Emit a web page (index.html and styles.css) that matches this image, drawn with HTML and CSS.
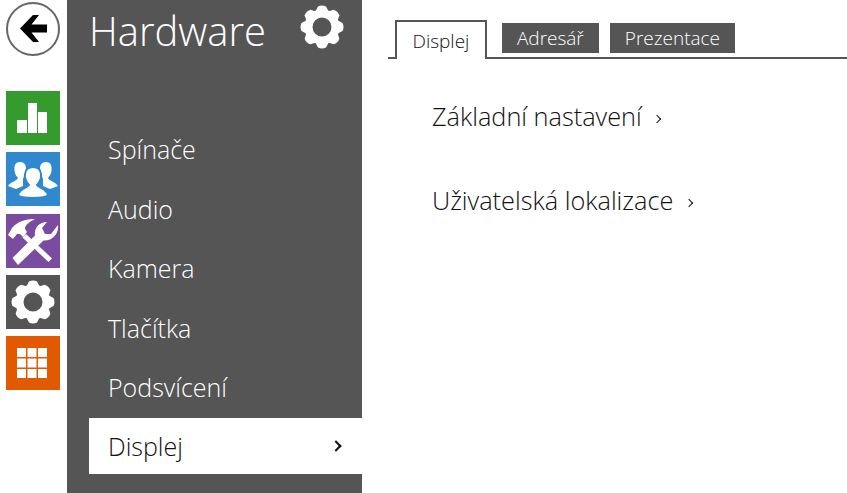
FILE: index.html
```html
<!DOCTYPE html>
<html>
  <head>
    <meta charset="UTF-8">
    <title>Hardware</title>
    <link rel="stylesheet" href="styles.css">
  </head>
  <body>
    <svg class="defs" width="0" height="0">
      <symbol id="gear" viewBox="0 0 54 54">
        <g fill="#fff">
          <path id="tooth" d="M23 6.500 Q27 4.500 31 6.500 L35 14 L19 14 Z"/>
          <use href="#tooth" transform="rotate(45 27 27)"/>
          <use href="#tooth" transform="rotate(90 27 27)"/>
          <use href="#tooth" transform="rotate(135 27 27)"/>
          <use href="#tooth" transform="rotate(180 27 27)"/>
          <use href="#tooth" transform="rotate(225 27 27)"/>
          <use href="#tooth" transform="rotate(270 27 27)"/>
          <use href="#tooth" transform="rotate(315 27 27)"/>
        </g>
        <circle cx="27" cy="27" r="13.500" fill="none" stroke="#fff" stroke-width="8"/>
      </symbol>
    </svg>

    <div class="page">
      <div class="rail">
        <div class="back">
          <svg width="54" height="54" viewBox="0 0 54 54">
            <circle cx="27" cy="27" r="26" fill="#fff" stroke="#666" stroke-width="2"/>
            <path d="M14 26.500 L27 13 L33 13 L25.500 22.500 L41 22.500 L41 30.500 L25.500 30.500 L33 40 L27 40 Z" fill="#000"/>
          </svg>
        </div>
        <div class="tiles">
          <div class="tile tile-green">
            <svg width="54" height="54" viewBox="0 0 54 54" fill="#fff">
              <rect x="11" y="29" width="10" height="13"/>
              <rect x="22" y="12" width="9" height="30"/>
              <rect x="32" y="21" width="9" height="21"/>
            </svg>
          </div>
          <div class="tile tile-blue">
            <svg width="54" height="54" viewBox="0 0 54 54" fill="#fff">
              <g>
                <path d="M2 34 C4 30 11 29 12 26 C9 23 8 19 8.500 15 C9 11 11.500 10 14 10 C17 10 20 12 20 16 C20 20 18 24 17 27 L17 34 L10 37 Z"/>
                <path d="M52 34 C50 30 43 29 42 26 C45 23 46 19 45.500 15 C45 11 42.500 10 40 10 C37 10 34 12 34 16 C34 20 36 24 37 27 L37 34 L44 37 Z"/>
              </g>
              <path d="M12 43 C13 37 21 36 23 33 C20 30 18.500 26 19 22 C19.500 17 23 15 27 15 C31 15 34.500 17 35 22 C35.500 26 34 30 31 33 C33 36 41 37 42 43 C40 47 14 47 12 43 Z" stroke="#3088cf" stroke-width="2"/>
            </svg>
          </div>
          <div class="tile tile-purple">
            <svg width="54" height="54" viewBox="0 0 54 54" fill="#fff">
              <path d="M2 21 L6 14 C12 7 20 5 29 5 C23 8 19 11 19 15 L21 18 L17 23 L14 20 L11 20 L7 25 Z"/>
              <path d="M16.500 23.500 L20 20 L46 44.500 L42.500 48 Z"/>
              <path d="M6.500 44 L29 21.500 C28 14 33 8 41 8 L36 14 L39 20 L45 20 L52 11 C53 19 47 27 37.500 26.500 L12 51 Z"/>
            </svg>
          </div>
          <div class="tile tile-grey">
            <svg width="54" height="54"><use href="#gear"/></svg>
          </div>
          <div class="tile tile-orange">
            <svg width="54" height="54" viewBox="0 0 54 54" fill="#fff">
              <rect x="11" y="12" width="9" height="9"/>
              <rect x="21.500" y="12" width="9" height="9"/>
              <rect x="32" y="12" width="9" height="9"/>
              <rect x="11" y="22.500" width="9" height="9"/>
              <rect x="21.500" y="22.500" width="9" height="9"/>
              <rect x="32" y="22.500" width="9" height="9"/>
              <rect x="11" y="33" width="9" height="9"/>
              <rect x="21.500" y="33" width="9" height="9"/>
              <rect x="32" y="33" width="9" height="9"/>
            </svg>
          </div>
        </div>
      </div>

      <div class="sidebar">
        <div class="sidebar-head">
          <span class="sidebar-title">Hardware</span>
          <svg width="54" height="54"><use href="#gear"/></svg>
        </div>
        <ul class="menu">
          <li>Spínače</li>
          <li>Audio</li>
          <li>Kamera</li>
          <li>Tlačítka</li>
          <li>Podsvícení</li>
          <li class="active">Displej <span class="chevron"></span></li>
        </ul>
      </div>

      <div class="main">
        <div class="tabs">
          <div class="tab tab-active">Displej</div>
          <div class="tab">Adresář</div>
          <div class="tab">Prezentace</div>
        </div>
        <div class="links">
          <a class="link">Základní nastavení <span class="chevron"></span></a>
          <a class="link">Uživatelská lokalizace <span class="chevron"></span></a>
        </div>
      </div>
    </div>
  </body>
</html>
```

FILE: styles.css
```css
html, body {
  margin: 0;
  height: 100%;
  background: #fff;
  overflow: hidden;
}

body {
  font-family: "Open Sans", "Noto Sans", sans-serif;
  font-weight: 300;
  color: #111;
}

.defs {
  position: absolute;
}

.page {
  display: flex;
  height: 493px;
}

/* Left icon rail */
.rail {
  width: 54px;
  padding: 2px 7px 0 6px;
  flex-shrink: 0;
}

.back {
  height: 54px;
}

.back svg, .tile svg, .sidebar-head svg {
  display: block;
}

.tiles {
  display: flex;
  flex-direction: column;
  gap: 7.250px;
  margin-top: 35px;
}

.tile {
  width: 54px;
  height: 54px;
}

.tile-green { background-color: #359b2f; }
.tile-blue { background-color: #3088cf; }
.tile-purple { background-color: #7a4b9f; }
.tile-grey { background-color: #555; }
.tile-orange { background-color: #e25a00; }

/* Hardware menu */
.sidebar {
  width: 295px;
  flex-shrink: 0;
  background-color: #555;
  color: #fff;
}

.sidebar-head {
  display: flex;
  justify-content: space-between;
  align-items: flex-start;
  padding: 0 13px 0 22px;
  height: 119.300px;
}

.sidebar-title {
  font-size: 40px;
  line-height: 62px;
}

.menu {
  list-style: none;
  margin: 0;
  padding: 0 0 0 22px;
}

.menu li {
  display: flex;
  justify-content: space-between;
  align-items: center;
  height: 59.500px;
  padding-left: 19px;
  padding-right: 22px;
  font-size: 25px;
}

.menu li.active {
  height: 56px;
  margin-top: 1px;
  background-color: #fff;
  color: #111;
}

.chevron {
  display: inline-block;
  width: 6px;
  height: 6px;
  border-top: 2px solid #111;
  border-right: 2px solid #111;
  transform: rotate(45deg);
}

/* Tabs and content */
.main {
  flex: 1;
  padding-left: 26px;
}

.tabs {
  display: flex;
  align-items: flex-end;
  height: 59px;
  box-sizing: border-box;
  padding-left: 7px;
  border-bottom: 2px solid #555;
}

.tab {
  display: flex;
  align-items: center;
  justify-content: center;
  height: 30px;
  margin: 0 11px 4px 0;
  padding: 0 15px;
  background-color: #555;
  color: #fff;
  font-size: 19px;
}

.tab-active {
  height: 37px;
  margin: 0 15px -2px 0;
  padding: 0 15.500px;
  background-color: #fff;
  color: #111;
  border: 2px solid #555;
  border-bottom: none;
}

.links {
  display: flex;
  flex-direction: column;
  align-items: flex-start;
  gap: 50px;
  padding: 40px 0 0 44px;
}

.link {
  font-size: 25.300px;
  line-height: 34px;
}

.link .chevron {
  width: 5px;
  height: 5px;
  border-width: 1px;
  margin-left: 6px;
  vertical-align: 4px;
}
```
